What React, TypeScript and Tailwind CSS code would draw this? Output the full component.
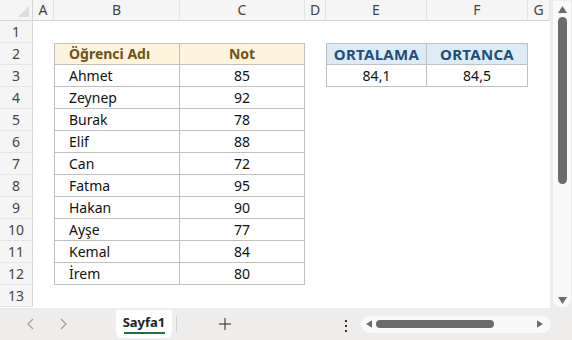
import React from 'react';

const cols = [
  { key: 'A', w: 'w-[21px]' },
  { key: 'B', w: 'w-[126px]' },
  { key: 'C', w: 'w-[125px]' },
  { key: 'D', w: 'w-[21px]' },
  { key: 'E', w: 'w-[101px]' },
  { key: 'F', w: 'w-[101px]' },
  { key: 'G', w: 'w-[22px]' },
];

const students = [
  ['Ahmet', '85'],
  ['Zeynep', '92'],
  ['Burak', '78'],
  ['Elif', '88'],
  ['Can', '72'],
  ['Fatma', '95'],
  ['Hakan', '90'],
  ['Ayşe', '77'],
  ['Kemal', '84'],
  ['İrem', '80'],
];

const Blank = ({ w }: { w: string }) => <div className={`${w} h-[22px] shrink-0`} />;

// one sheet row (rows 1..13)
const SheetRow = ({ n }: { n: number }) => {
  const idx = n - 3;
  const student = idx >= 0 && idx < students.length ? students[idx] : null;

  let b: React.ReactNode = <Blank w="w-[126px]" />;
  let c: React.ReactNode = <Blank w="w-[125px]" />;
  let e: React.ReactNode = <Blank w="w-[101px]" />;
  let f: React.ReactNode = <Blank w="w-[101px]" />;

  if (n === 2) {
    b = (
      <div className="w-[126px] h-[22px] shrink-0 border border-[#bfbfbf] bg-[#fcf4dc] pl-[14px] font-bold text-[#6e5314] leading-[20px]">
        Öğrenci Adı
      </div>
    );
    c = (
      <div className="w-[125px] h-[22px] shrink-0 border-t border-r border-b border-[#bfbfbf] bg-[#fcf4dc] text-center font-bold text-[#6e5314] leading-[20px]">
        Not
      </div>
    );
    e = (
      <div className="w-[101px] h-[22px] shrink-0 border border-[#bfbfbf] bg-[#ddebf7] text-center font-bold text-[15px] tracking-[0.3px] text-[#1f4e78] leading-[20px]">
        ORTALAMA
      </div>
    );
    f = (
      <div className="w-[101px] h-[22px] shrink-0 border-t border-r border-b border-[#bfbfbf] bg-[#ddebf7] text-center font-bold text-[15px] tracking-[0.3px] text-[#1f4e78] leading-[20px]">
        ORTANCA
      </div>
    );
  }

  if (n === 3) {
    e = (
      <div className="w-[101px] h-[22px] shrink-0 border-l border-r border-b border-[#bfbfbf] text-center leading-[21px]">
        84,1
      </div>
    );
    f = (
      <div className="w-[101px] h-[22px] shrink-0 border-r border-b border-[#bfbfbf] text-center leading-[21px]">
        84,5
      </div>
    );
  }

  if (student) {
    b = (
      <div className="w-[126px] h-[22px] shrink-0 border-l border-r border-b border-[#bfbfbf] pl-[14px] leading-[21px]">
        {student[0]}
      </div>
    );
    c = (
      <div className="w-[125px] h-[22px] shrink-0 border-r border-b border-[#bfbfbf] text-center leading-[21px]">
        {student[1]}
      </div>
    );
  }

  return (
    <div className="flex h-[22px]">
      <div className="w-[33px] h-[22px] shrink-0 bg-[#f5f5f5] border-r border-b border-r-[#d6d6d6] border-b-[#e6e6e6] text-center text-[#444] leading-[21px]">
        {n}
      </div>
      <Blank w="w-[21px]" />
      {b}
      {c}
      <Blank w="w-[21px]" />
      {e}
      {f}
      <Blank w="w-[22px]" />
    </div>
  );
};

const Tri = ({ dir, cls }: { dir: 'up' | 'down' | 'left' | 'right'; cls: string }) => {
  const pts = {
    up: '0,7 4.5,0 9,7',
    down: '0,0 9,0 4.5,7',
    left: '7,0 7,9 0,4.5',
    right: '0,0 0,9 7,4.5',
  }[dir];
  const vb = dir === 'up' || dir === 'down' ? '0 0 9 7' : '0 0 7 9';
  return (
    <svg viewBox={vb} className={cls}>
      <polygon points={pts} fill="#6b6b6b" />
    </svg>
  );
};

export default function App() {
  const rows = Array.from({ length: 13 }, (_, i) => i + 1);

  return (
    <div
      className="w-[572px] h-[340px] overflow-hidden bg-[#efedec] flex flex-col text-[14px] text-[#111]"
      style={{ fontFamily: '"Noto Sans", "Open Sans", sans-serif' }}
    >
      <div className="flex h-[308px]">
        {/* Sheet */}
        <div className="w-[550px] bg-white flex flex-col">
          {/* column headers */}
          <div className="flex h-[21px] bg-[#f5f5f5] border-b border-[#d4d4d4]">
            <div className="w-[33px] shrink-0 border-r border-[#d6d6d6] relative overflow-hidden">
              <svg viewBox="0 0 12 12" className="absolute right-[3px] bottom-[3px] w-[11px] h-[11px]">
                <polygon points="12,0 12,12 0,12" fill="#dcdcdc" />
              </svg>
            </div>
            {cols.map((c) => (
              <div
                key={c.key}
                className={`${c.w} shrink-0 border-r border-[#e3e3e3] text-center text-[#444] leading-[20px]`}
              >
                {c.key}
              </div>
            ))}
          </div>
          {rows.map((n) => (
            <SheetRow key={n} n={n} />
          ))}
        </div>

        {/* vertical scrollbar */}
        <div className="flex-1 pl-[3px] pt-[1px] pb-[1px]">
          <div className="h-full w-[18px] rounded-b-[8px] bg-[#f9f9f9] flex flex-col items-center">
            <Tri dir="up" cls="w-[9px] h-[7px] mt-[5px]" />
            <div className="w-[9px] h-[167px] mt-[4px] rounded-full bg-[#6b6b6b]" />
            <div className="flex-1" />
            <Tri dir="down" cls="w-[9px] h-[7px] mb-[3px]" />
          </div>
        </div>
      </div>

      {/* bottom bar */}
      <div className="flex-1 flex items-center relative">
        <div className="w-[116px] flex items-center pl-[27px] gap-[22px] text-[#9a9a9a]">
          <svg viewBox="0 0 8 12" className="w-[8px] h-[12px]">
            <polyline points="6,1 1,6 6,11" fill="none" stroke="#a0a0a0" strokeWidth="1.2" />
          </svg>
          <svg viewBox="0 0 8 12" className="w-[8px] h-[12px] ml-[2px]">
            <polyline points="2,1 7,6 2,11" fill="none" stroke="#a0a0a0" strokeWidth="1.2" />
          </svg>
        </div>
        <div className="w-[56px] h-[28px] self-start mt-[2px] bg-white rounded-b-[6px] flex flex-col items-center pt-[4px]">
          <span className="font-bold text-[13px] leading-[16px] text-[#222]">Sayfa1</span>
          <div className="w-[41px] h-[2px] bg-[#1e7145] mt-[2px]" />
        </div>
        <div className="w-[1px] h-[16px] bg-[#d0d0d0] ml-[4px]" />
        <div className="ml-[41px] w-[14px] h-[14px] flex items-center justify-center">
          <svg viewBox="0 0 14 14" className="w-[14px] h-[14px]">
            <line x1="7" y1="1" x2="7" y2="13" stroke="#333" strokeWidth="1.1" />
            <line x1="1" y1="7" x2="13" y2="7" stroke="#333" strokeWidth="1.1" />
          </svg>
        </div>
        <div className="ml-[113px] flex flex-col gap-[3px] pt-[3px]">
          <div className="w-[2px] h-[2px] bg-[#333]" />
          <div className="w-[2px] h-[2px] bg-[#333]" />
          <div className="w-[2px] h-[2px] bg-[#333]" />
        </div>
        <div className="ml-[14px] w-[190px] h-[17px] rounded-full bg-[#f9f9f9] flex items-center px-[5px]">
          <Tri dir="left" cls="w-[6px] h-[8px]" />
          <div className="ml-[4px] w-[118px] h-[8px] rounded-full bg-[#6b6b6b]" />
          <div className="flex-1" />
          <Tri dir="right" cls="w-[6px] h-[8px] mr-[3px]" />
        </div>
      </div>
    </div>
  );
}
